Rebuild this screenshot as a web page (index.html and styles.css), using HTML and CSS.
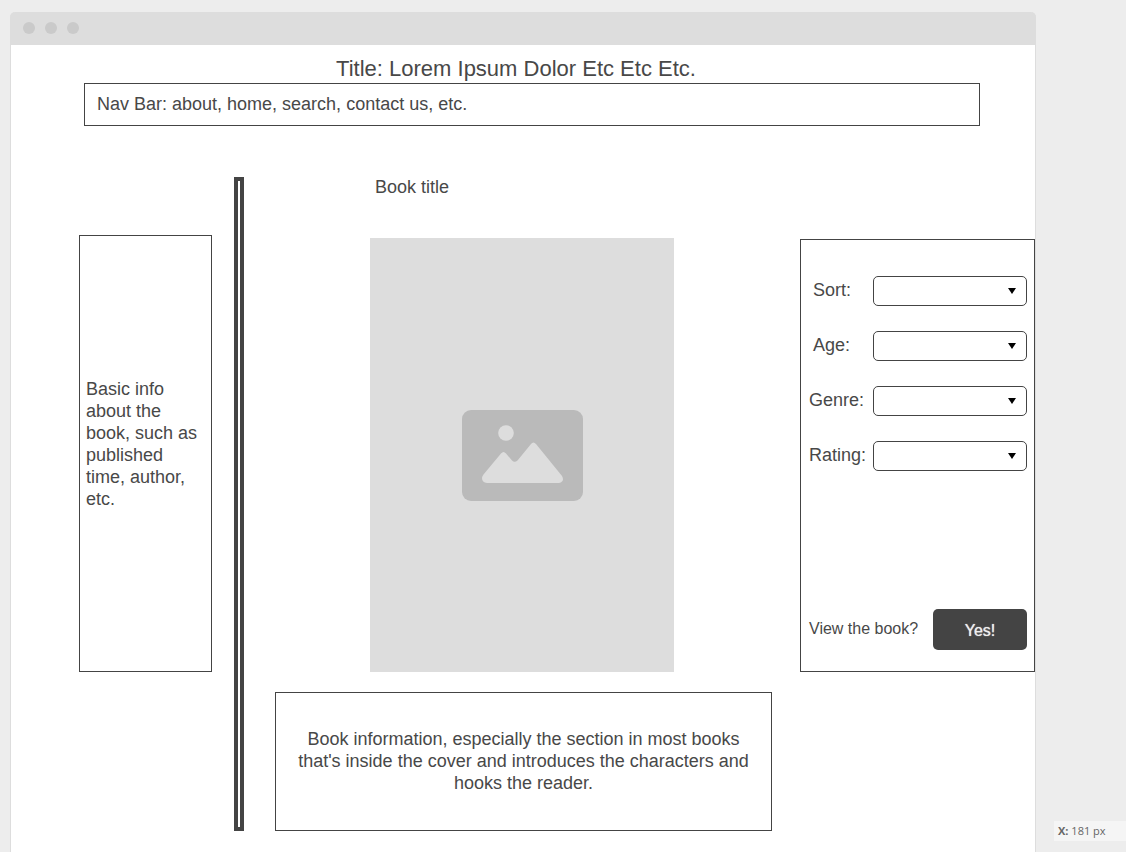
FILE: index.html
```html
<!DOCTYPE html>
<html lang="en">
<head>
<meta charset="utf-8">
<meta name="viewport" content="width=device-width, initial-scale=1">
<title>Book page wireframe</title>
<link rel="stylesheet" href="styles.css">
</head>
<body>
<div class="window">
  <div class="window-bar">
    <span class="window-dot"></span>
    <span class="window-dot"></span>
    <span class="window-dot"></span>
  </div>
  <header class="header">
    <h1 class="title">Title: Lorem Ipsum Dolor Etc Etc Etc.</h1>
    <nav class="nav">Nav Bar: about, home, search, contact us, etc.</nav>
  </header>
  <main class="content">
    <aside class="info box">
      <p>Basic info about the book, such as published time, author, etc.</p>
    </aside>
    <div class="divider"></div>
    <section class="book">
      <h2 class="book-title">Book title</h2>
      <div class="cover">
        <svg class="cover-icon" viewBox="0 0 121 91" aria-hidden="true">
          <rect width="121" height="91" rx="9" fill="#bababa"/>
          <circle cx="44" cy="23" r="7.8" fill="#ddd"/>
          <path d="M25 73 Q20 72.500 20 68 Q20 66.500 21.500 64.500 L39 43.500 Q41.500 40.500 44 43.500 L50 50.500 Q52.500 53 55.500 50.500 L69 34 Q71.300 31 74 34 L100 66 Q103 71.500 97 73 Z" fill="#ddd"/>
        </svg>
      </div>
      <div class="description box">
        <p>Book information, especially the section in most books that's inside the cover and introduces the characters and hooks the reader.</p>
      </div>
    </section>
    <form class="filters box">
      <div class="field">
        <label class="label label-inset" for="sort">Sort:</label>
        <select class="select" id="sort"></select>
        <svg class="arrow" viewBox="0 0 8 6" aria-hidden="true"><path d="M0 0H8L4 6Z"/></svg>
      </div>
      <div class="field">
        <label class="label label-inset" for="age">Age:</label>
        <select class="select" id="age"></select>
        <svg class="arrow" viewBox="0 0 8 6" aria-hidden="true"><path d="M0 0H8L4 6Z"/></svg>
      </div>
      <div class="field">
        <label class="label" for="genre">Genre:</label>
        <select class="select" id="genre"></select>
        <svg class="arrow" viewBox="0 0 8 6" aria-hidden="true"><path d="M0 0H8L4 6Z"/></svg>
      </div>
      <div class="field">
        <label class="label" for="rating">Rating:</label>
        <select class="select" id="rating"></select>
        <svg class="arrow" viewBox="0 0 8 6" aria-hidden="true"><path d="M0 0H8L4 6Z"/></svg>
      </div>
      <div class="action">
        <span class="label" id="view-label">View the book?</span>
        <button class="button" type="button" aria-describedby="view-label">Yes!</button>
      </div>
    </form>
  </main>
</div>
<div class="position"><b>X:</b> 181 px</div>
</body>
</html>
```
FILE: styles.css
```css
* {
  box-sizing: border-box;
}

body {
  display: flex;
  min-height: 100vh;
  margin: 0;
  padding: 12px 90px 0 10px;
  background: #ededed;
  color: #484848;
  font: 18px/22px "Liberation Sans", Arial, sans-serif;
}

h1,
h2,
p {
  margin: 0;
  font-weight: normal;
}

.window {
  flex: 1;
  min-width: 0;
  border: 1px solid #ddd;
  border-width: 0 1px;
  border-radius: 6px 6px 0 0;
  background: #fff;
}

.window-bar {
  display: flex;
  align-items: center;
  gap: 10px;
  height: 33px;
  margin: 0 -1px;
  padding: 0 13px 1px;
  border-radius: 5px 5px 0 0;
  background: #ddd;
}

.window-dot {
  width: 12px;
  height: 12px;
  border-radius: 50%;
  background: #cacaca;
}

.header {
  padding: 10px 55px 0 73px;
}

.title {
  padding-right: 32px;
  font-size: 22px;
  line-height: 28px;
  text-align: center;
}

.nav {
  padding: 9px 12px 10px;
  border: 1px solid #444;
}

.box {
  border: 1px solid #444;
}

.content {
  display: grid;
  grid-template-columns: 133px 10px minmax(0, 1fr) 235px;
  padding: 51px 0 21px 68px;
}

.info {
  display: flex;
  align-items: center;
  margin: 58px 0 159px;
  padding: 0 6px 20px;
}

.divider {
  width: 10px;
  margin-left: 22px;
  border: 4px solid #444;
}

.book {
  margin: 0 28px 0 53px;
}

.book-title {
  padding: 0 0 41px 100px;
  font-size: 18px;
  line-height: 20px;
}

.cover {
  display: flex;
  align-items: center;
  justify-content: center;
  height: 434px;
  margin: 0 98px 0 95px;
  background: #ddd;
}

.cover-icon {
  width: 121px;
  height: 91px;
}

.description {
  margin-top: 20px;
  padding: 35px 20px 36px;
  text-align: center;
}

.filters {
  display: flex;
  flex-direction: column;
  gap: 25px;
  margin: 62px 0 159px;
  padding: 36px 7px 21px 8px;
}

.field {
  display: grid;
  grid-template-columns: 64px 1fr;
  align-items: center;
}

.label {
  padding-bottom: 2px;
}

.label-inset {
  padding-left: 4px;
}

.select {
  grid-area: 1 / 2;
  width: 100%;
  height: 30px;
  border: 1px solid #444;
  border-radius: 5px;
  background: #fff;
  appearance: none;
}

.arrow {
  grid-area: 1 / 2;
  justify-self: end;
  width: 8px;
  height: 6px;
  margin-right: 11px;
  pointer-events: none;
}

.action {
  display: flex;
  align-items: center;
  justify-content: space-between;
  margin-top: auto;
  font-size: 16px;
}

.button {
  width: 94px;
  height: 41px;
  padding: 2px 0 0;
  border: 0;
  border-radius: 5px;
  background: #444;
  color: #eee;
  font: inherit;
  text-shadow: 0 0 1px #eee;
}

.position {
  position: fixed;
  right: 0;
  bottom: 11px;
  width: 72px;
  padding: 0 4px;
  background: #f5f5f5;
  color: #666;
  font: 11px/20px "Open Sans", sans-serif;
}
```
